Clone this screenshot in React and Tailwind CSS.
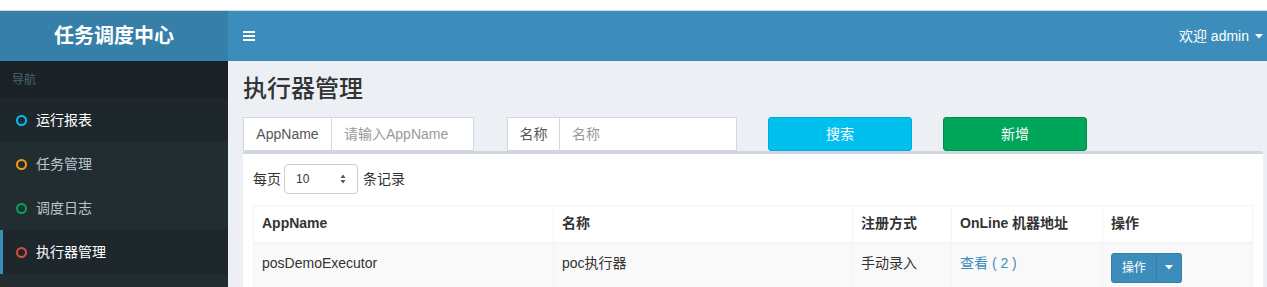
import React from "react";

const menu = [
  { label: "运行报表", color: "border-[#00c0ef]", state: "hover" },
  { label: "任务管理", color: "border-[#f39c12]", state: "" },
  { label: "调度日志", color: "border-[#00a65a]", state: "" },
  { label: "执行器管理", color: "border-[#dd4b39]", state: "active" },
];

function Caret({ className = "" }) {
  return (
    <svg width="8" height="5" viewBox="0 0 8 5" className={className}>
      <path d="M0 0h8L4 4.5z" fill="currentColor" />
    </svg>
  );
}

function Sidebar() {
  return (
    <aside className="w-[228px] shrink-0 flex flex-col">
      <div className="h-[50px] bg-[#367fa9] flex items-center justify-center text-white text-[20px] font-bold">
        任务调度中心
      </div>
      <div className="flex-1 bg-[#222d32]">
        <div className="h-[37px] bg-[#1a2226] text-[#4b646f] text-[12px] pl-[12px] flex items-center">导航</div>
        <ul>
          {menu.map((m) => (
            <li
              key={m.label}
              className={`h-[44px] flex items-center border-l-[3px] text-[14px] ${
                m.state === "active"
                  ? "bg-[#1e282c] border-[#3c8dbc] text-white"
                  : m.state === "hover"
                  ? "bg-[#1e282c] border-transparent text-white"
                  : "border-transparent text-[#b8c7ce]"
              }`}
            >
              <span className={`ml-[13px] w-[11px] h-[11px] rounded-full border-2 ${m.color}`} />
              <span className="ml-[9px]">{m.label}</span>
            </li>
          ))}
        </ul>
      </div>
    </aside>
  );
}

function InputGroup({ label, placeholder, addonW, width }) {
  return (
    <div className={`flex h-[34px] ${width}`}>
      <span className={`${addonW} shrink-0 flex items-center justify-center bg-white border border-[#d2d6de] text-[#555] text-[14px]`}>
        {label}
      </span>
      <input
        className="flex-1 min-w-0 bg-white border border-l-0 border-[#d2d6de] px-[12px] text-[14px] outline-none placeholder:text-[#999]"
        placeholder={placeholder}
      />
    </div>
  );
}

export default function App() {
  return (
    <div className="w-[1267px] h-[287px] overflow-hidden bg-white text-[#333] font-['Liberation_Sans','Noto_Sans_CJK_SC',sans-serif]">
      <div className="h-[11px] bg-white border-b border-[#d2d6de]" />
      <div className="flex h-[276px]">
        <Sidebar />
        <main className="flex-1 flex flex-col bg-[#ecf0f5]">
          <header className="h-[50px] shrink-0 bg-[#3c8dbc] flex items-center justify-between text-white text-[14px]">
            <div className="ml-[15px] flex flex-col gap-[2px]">
              <span className="w-[12px] h-[2px] bg-white" />
              <span className="w-[12px] h-[2px] bg-white" />
              <span className="w-[12px] h-[2px] bg-white" />
            </div>
            <div className="flex items-center gap-[6px] mr-[4px]">
              <span>欢迎 admin</span>
              <Caret />
            </div>
          </header>
          <div className="pl-[15px] pr-[4px] pt-[15px]">
            <h1 className="text-[24px] leading-[26px] font-medium text-[#333]">执行器管理</h1>
            <div className="mt-[15px] flex items-center">
              <InputGroup label="AppName" placeholder="请输入AppName" addonW="w-[89px]" width="w-[231px]" />
              <div className="w-[33px]" />
              <InputGroup label="名称" placeholder="名称" addonW="w-[53px]" width="w-[230px]" />
              <button className="ml-[31px] w-[144px] h-[34px] rounded-[3px] bg-[#00c0ef] border border-[#00acd6] text-white text-[14px]">
                搜索
              </button>
              <button className="ml-[31px] w-[144px] h-[34px] rounded-[3px] bg-[#00a65a] border border-[#008d4c] text-white text-[14px]">
                新增
              </button>
            </div>
            <section className="bg-white border-t-[3px] border-[#d2d6de] rounded-t-[3px] p-[10px]">
              <div className="flex items-center text-[14px] h-[30px]">
                <span className="mr-[3px]">每页</span>
                <div className="w-[74px] h-[30px] border border-[#ccc] rounded-[4px] flex items-center justify-between px-[11px] text-[12px]">
                  <span>10</span>
                  <svg width="6" height="10" viewBox="0 0 6 10">
                    <path d="M3 0.5L5.5 4H0.5zM3 9.5L0.5 6h5z" fill="#555" />
                  </svg>
                </div>
                <span className="ml-[5px]">条记录</span>
              </div>
              <table className="mt-[11px] w-full table-fixed border-collapse border border-[#f4f4f4] text-[14px]">
                <colgroup>
                  <col className="w-[300px]" />
                  <col className="w-[299px]" />
                  <col className="w-[99px]" />
                  <col className="w-[151px]" />
                  <col />
                </colgroup>
                <thead>
                  <tr className="h-[37px] text-left font-bold border-b-2 border-[#f4f4f4]">
                    <th className="px-[8px] border border-[#f4f4f4]">AppName</th>
                    <th className="px-[8px] border border-[#f4f4f4]">名称</th>
                    <th className="px-[8px] border border-[#f4f4f4]">注册方式</th>
                    <th className="px-[8px] border border-[#f4f4f4]">OnLine 机器地址</th>
                    <th className="px-[8px] border border-[#f4f4f4]">操作</th>
                  </tr>
                </thead>
                <tbody>
                  <tr className="bg-[#f9f9f9]">
                    <td className="px-[8px] pt-[9px] pb-[8px] align-top border border-[#f4f4f4]">posDemoExecutor</td>
                    <td className="px-[8px] pt-[9px] pb-[8px] align-top border border-[#f4f4f4]">poc执行器</td>
                    <td className="px-[8px] pt-[9px] pb-[8px] align-top border border-[#f4f4f4]">手动录入</td>
                    <td className="px-[8px] pt-[9px] pb-[8px] align-top border border-[#f4f4f4]">
                      <a className="text-[#3c8dbc]">查看 ( 2 )</a>
                    </td>
                    <td className="px-[8px] pt-[9px] pb-[8px] align-top border border-[#f4f4f4]">
                      <div className="inline-flex h-[30px] text-white text-[12px]">
                        <span className="w-[46px] flex items-center justify-center bg-[#3c8dbc] border border-[#367fa9] rounded-l-[3px]">操作</span>
                        <span className="w-[25px] flex items-center justify-center bg-[#3c8dbc] border border-l-0 border-[#367fa9] rounded-r-[3px]">
                          <Caret />
                        </span>
                      </div>
                    </td>
                  </tr>
                </tbody>
              </table>
            </section>
          </div>
        </main>
      </div>
    </div>
  );
}
